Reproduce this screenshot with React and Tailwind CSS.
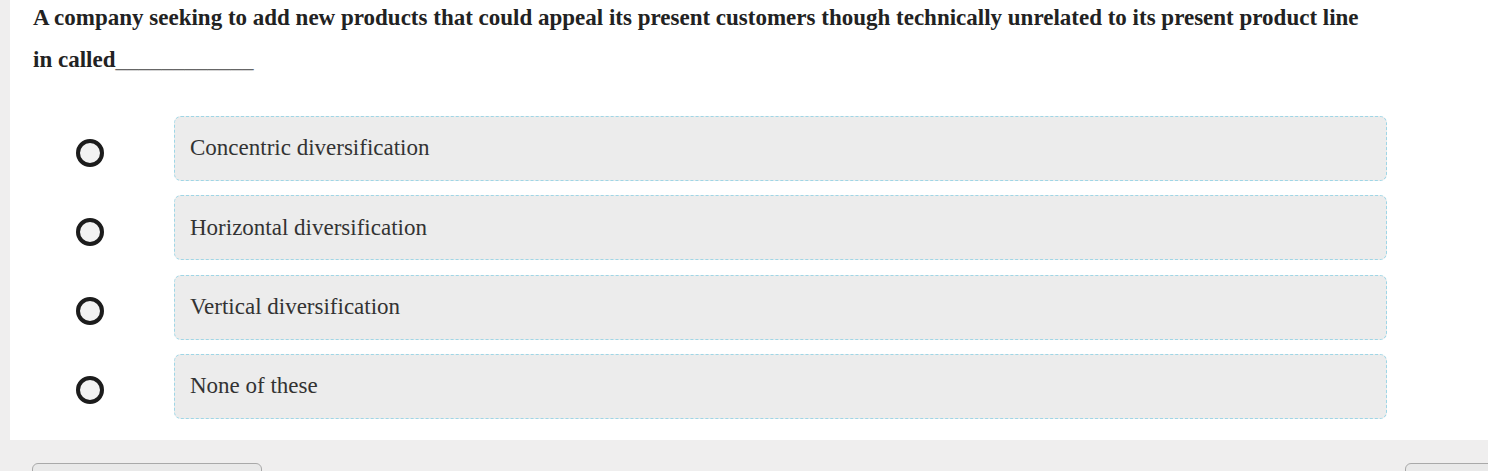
export default function App() {
  const options = [
    'Concentric diversification',
    'Horizontal diversification',
    'Vertical diversification',
    'None of these',
  ]

  return (
    <div className="w-[1488px] h-[471px] overflow-hidden bg-[#efeeee] font-['Liberation_Serif',serif]">
      <div className="flow-root ml-[10px] h-[440px] bg-white pl-[23px]">
        <p className="-mt-[3px] text-[23px] font-bold leading-[42px] text-[#222]">
          A company seeking to add new products that could appeal its present customers though technically unrelated to its present product line
          <br />
          in called<span className="font-normal text-[#666]">____________</span>
        </p>

        <div className="mt-[35px] flex flex-col gap-[14.3px]">
          {options.map((opt) => (
            <div key={opt} className="flex items-center">
              <div className="w-[141px] pl-[43px] pt-[8px]">
                <span className="block w-[28px] h-[28px] rounded-full border-[4px] border-[#1c1c1c] bg-[#f2f2f2]" />
              </div>
              <div className="w-[1213px] h-[65px] flex items-center px-[15px] rounded-[7px] border border-dashed border-[#9fd6e6] bg-[#ececec] text-[23px] text-[#333]">
                {opt}
              </div>
            </div>
          ))}
        </div>
      </div>

      <div className="flex justify-between pl-[32px] pt-[23px]">
        <div className="w-[230px] h-[30px] rounded-[6px] border border-[#a9a9a9] bg-[#e9e9e9]" />
        <div className="w-[100px] h-[30px] rounded-[6px] border border-[#a9a9a9] bg-[#e9e9e9] -mr-[17px]" />
      </div>
    </div>
  )
}
